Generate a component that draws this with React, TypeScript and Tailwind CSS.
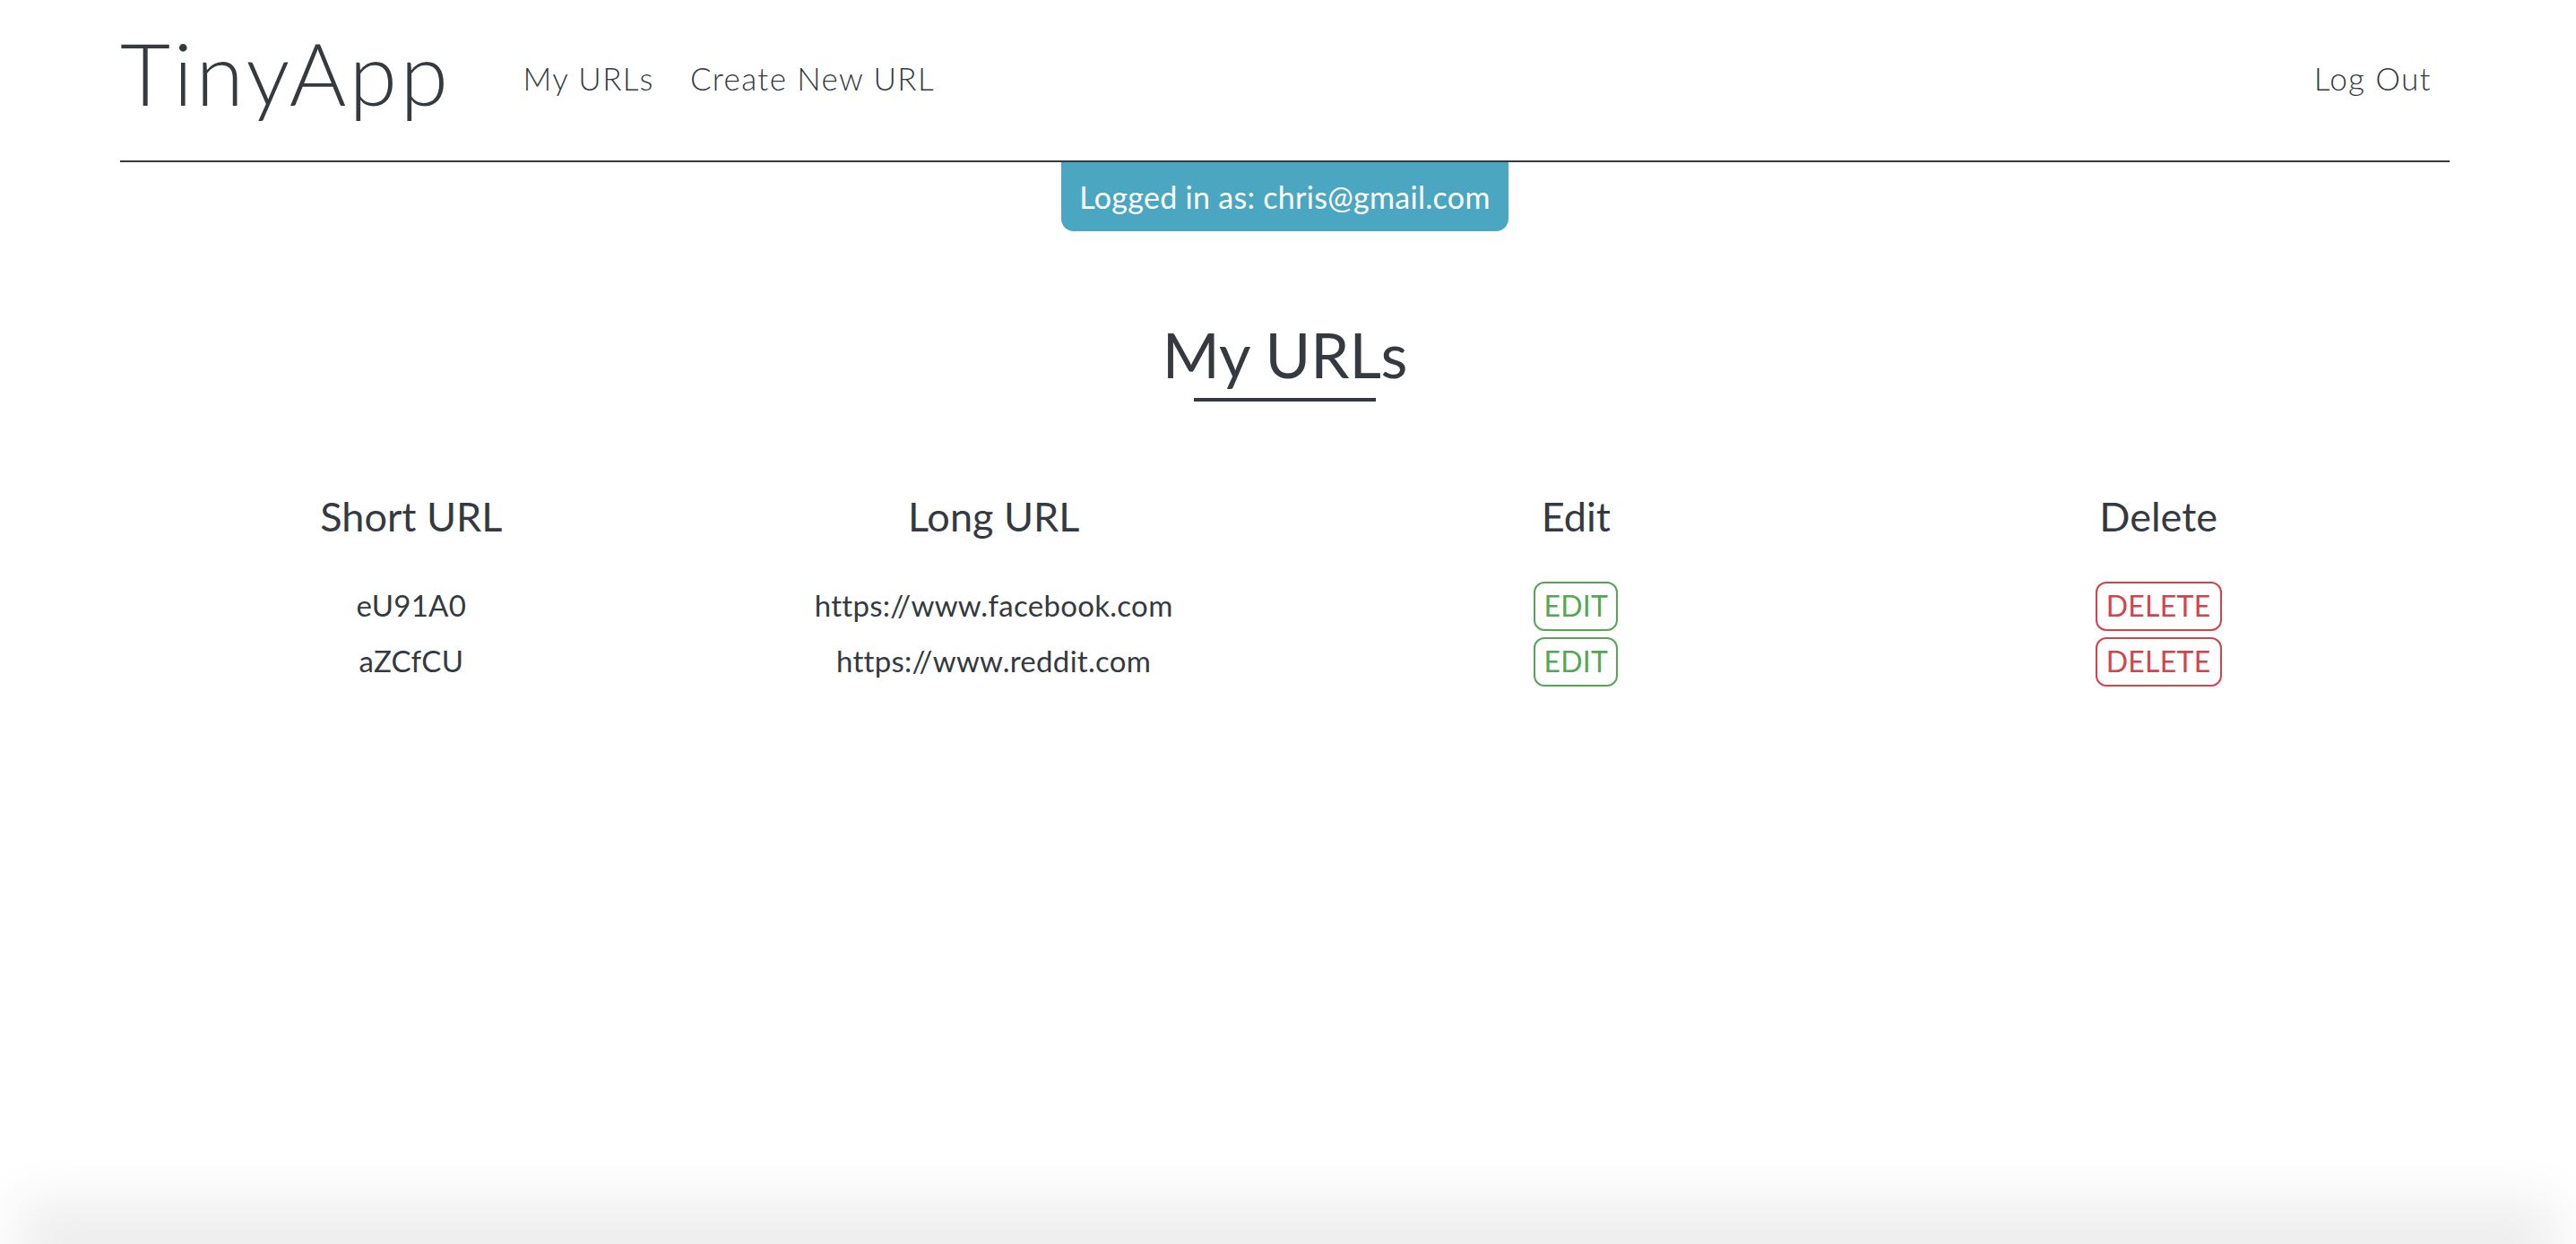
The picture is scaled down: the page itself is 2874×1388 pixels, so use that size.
import React from 'react'

const urls = [
  { short: 'eU91A0', long: 'https://www.facebook.com' },
  { short: 'aZCfCU', long: 'https://www.reddit.com' },
]

export default function App() {
  return (
    <div className="h-screen flex flex-col overflow-hidden bg-white text-[#343a40] font-['Lato','Open_Sans',sans-serif]">
      <div className="flex-1 ml-[134px] mr-[141px]">
        {/* Navbar */}
        <nav className="h-[181px] flex items-center border-b-2 border-[#343a40] pb-[18px]">
          <span className="text-[97px] font-light leading-none tracking-[3.5px]">TinyApp</span>
          <div className="flex items-center gap-[40px] ml-[80px] mt-[14px] text-[35px] font-light leading-none tracking-[1.4px]">
            <a>My URLs</a>
            <a>Create New URL</a>
          </div>
          <a className="ml-auto mr-[20px] mt-[14px] text-[35px] font-light leading-none tracking-[1.4px]">Log Out</a>
        </nav>

        {/* Logged in badge */}
        <div className="flex justify-center">
          <div className="h-[77px] px-[20px] flex items-center rounded-b-[14px] bg-[#4ba6c2] text-white text-[34px] leading-none tracking-[0.3px]">
            Logged in as: chris@gmail.com
          </div>
        </div>

        {/* Heading */}
        <div className="flex flex-col items-center mt-[103px]">
          <h1 className="text-[69px] leading-none">My URLs</h1>
          <div className="w-[203px] h-[4px] mt-[14px] bg-[#343a40]" />
        </div>

        {/* Table */}
        <div className="mt-[106px]">
          <div className="grid grid-cols-4 text-center text-[45px] leading-none">
            <div>Short URL</div>
            <div>Long URL</div>
            <div>Edit</div>
            <div>Delete</div>
          </div>
          <div className="mt-[46px]">
            {urls.map((u) => (
              <div key={u.short} className="grid grid-cols-4 h-[62px] items-center text-center text-[33px] tracking-[0.3px]">
                <div>{u.short}</div>
                <div>{u.long}</div>
                <div className="flex justify-center">
                  <button className="h-[55px] px-[9px] border-2 border-[#55a655] rounded-[12px] text-[#55a655] text-[32px] leading-none">
                    EDIT
                  </button>
                </div>
                <div className="flex justify-center">
                  <button className="h-[55px] px-[10px] border-2 border-[#d2444c] rounded-[12px] text-[#d2444c] text-[32px] leading-none">
                    DELETE
                  </button>
                </div>
              </div>
            ))}
          </div>
        </div>
      </div>

      {/* footer shadow peeking from below */}
      <div className="h-0 mx-[70px] shadow-[0_0_60px_50px_rgba(0,0,0,0.07)]" />
    </div>
  )
}
